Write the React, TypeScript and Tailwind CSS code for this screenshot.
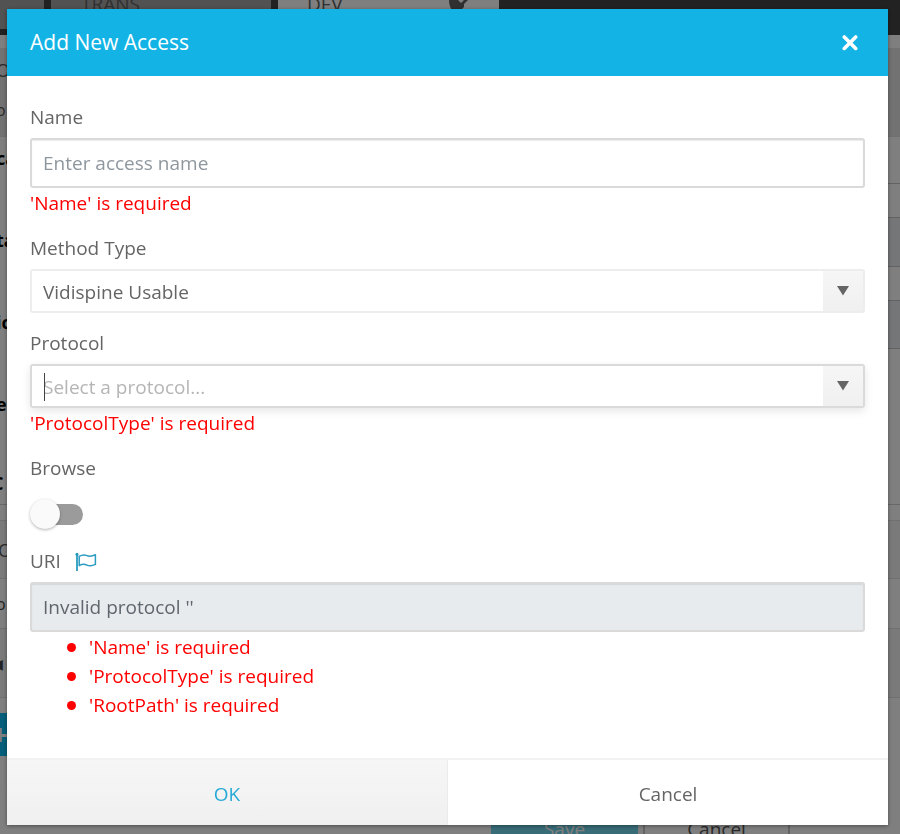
import React, { useState } from "react";

const label = "block w-fit text-[19px] leading-[29px] text-[#656565]";
const error = "mt-px text-[19px] leading-[29px] text-[#ff0000]";
const pageRow = "border-b border-[#e0e0e0]";

const uriErrors = ["'Name' is required", "'ProtocolType' is required", "'RootPath' is required"];

function CloseIcon() {
  return (
    <svg width="16" height="16" viewBox="0 0 16 16" fill="none" stroke="currentColor" strokeWidth="3.6" strokeLinecap="round">
      <path d="M2.3 2L13.7 13.4M13.7 2L2.3 13.4" />
    </svg>
  );
}

function FlagIcon() {
  return (
    <svg width="22" height="20" viewBox="0 0 22 20" fill="none" stroke="#2b9cc0" strokeWidth="1.5">
      <circle cx="2" cy="2.4" r="1.6" fill="#2b9cc0" stroke="none" />
      <path d="M2 2.4V19" strokeWidth="1.8" />
      <path d="M4.2 4.4C6.6 2.9 9 2.5 11.3 3.4C14 4.7 17 4.4 20.4 2.8V12.4C17 14.2 14 14.2 11.3 12.8C9 11.8 6.6 12.2 4.2 13.6Z" strokeLinejoin="round" />
    </svg>
  );
}

type DropDownProps = {
  id: string;
  options: string[];
  placeholder?: string;
  active?: boolean;
};

function DropDown({ id, options, placeholder, active }: DropDownProps) {
  return (
    <div
      className={
        active
          ? "relative flex h-11 rounded-[3px] border-2 border-[#dadada] shadow-[0_3px_8px_rgba(0,0,0,0.1)]"
          : "relative flex h-11 rounded-[3px] border-2 border-[#ededed]"
      }
    >
      <select
        id={id}
        defaultValue={placeholder ? "" : options[0]}
        className={
          placeholder
            ? "w-full appearance-none bg-white pt-0.5 pr-12 pl-[11px] text-[19px] text-[#b5b5b5] outline-none"
            : "w-full appearance-none bg-white pt-0.5 pr-12 pl-[11px] text-[19px] text-[#656565] outline-none"
        }
      >
        {placeholder && <option value="">{placeholder}</option>}
        {options.map((o) => (
          <option key={o}>{o}</option>
        ))}
      </select>
      {active && <span className="absolute top-[7px] left-3 h-7 w-px bg-[#444]" />}
      <span className="pointer-events-none absolute inset-y-0 right-0 flex w-10 items-center justify-center bg-linear-to-b from-[#f6f6f6] to-[#f0f0f0]">
        <svg width="12" height="10" viewBox="0 0 12 10">
          <path d="M0 0H12L6 9.5Z" fill="#656565" />
        </svg>
      </span>
    </div>
  );
}

/* Page under the dialog, only its edges stay visible */
function AccessPage() {
  return (
    <div aria-hidden="true" className="text-[18px]">
      <div className="flex h-[35px] items-start gap-[7px] bg-[#444]">
        <div className="h-[29px] w-11 bg-[#a4a4a4]" />
        <div className="h-[29px] w-[220px] bg-[#a4a4a4] pl-[30px] text-[19px] leading-[8px] text-[#606060]">TRANS</div>
        <div className="flex h-[29px] w-[221px] bg-white pl-[29px] text-[19px] leading-[8px] text-[#606060]">
          <span className="w-[142px]">DEV</span>
          <svg width="20" height="10" viewBox="0 0 20 10">
            <path d="M0 0H9L12 3L15 0H19L15 4V7L12 10H3Q0 6 0 0Z" fill="#606060" />
          </svg>
        </div>
      </div>
      <div className="h-[13px] bg-white" />
      <div className={"h-[89px] bg-[#e4e4e4] text-[#555] " + pageRow}>
        <p className="-ml-1 pt-2 leading-7">O</p>
        <p className="-ml-1 pt-4 text-[16px] leading-5">o</p>
      </div>
      <div className="flex h-[368px] justify-between border-b border-[#d0d0d0] font-bold text-black">
        <div className="flex flex-col pt-1 leading-[34px]">
          <span className="-ml-1 mb-12">ca</span>
          <span className="-ml-1 mb-12">ta</span>
          <span className="-ml-1 mb-12">ic</span>
          <span className="-ml-1 mb-12">e</span>
          <span className="-ml-2 leading-7">C</span>
        </div>
        <div className="w-1/2">
          <div className="h-[47px] border-b border-[#c4c4c4]" />
          <div className="h-[34px] border-b border-[#c4c4c4]" />
          <div className="h-[49px] border-b border-[#c4c4c4] bg-[#e9ecef]" />
          <div className="h-[34px] border-b border-[#c4c4c4]" />
          <div className="h-[48px] border-b border-[#c4c4c4] bg-[#e9ecef]" />
        </div>
      </div>
      <div className={"h-4 " + pageRow} />
      <div className={"h-[58px] bg-[#f4f4f4] text-[#555] leading-[58px] " + pageRow}>
        <p className="-ml-0.5">O</p>
      </div>
      <div className={"h-[50px] text-[16px] text-[#444] leading-[50px] " + pageRow}>
        <p className="-ml-1">o</p>
      </div>
      <div className={"h-[69px] bg-[#f4f4f4] leading-[69px] " + pageRow}>
        <p className="-ml-2 text-[14px] text-[#444]">◀</p>
      </div>
      <div className="mt-[15px] h-[43px] w-11 bg-[#0abef4]">
        <p className="-ml-2 text-[28px] leading-[43px] font-bold text-white">+</p>
      </div>
      <div className="mt-12 flex justify-end gap-[5px] pr-[110px]">
        <div className="h-[50px] w-[147px] bg-[#70d8ee] text-center text-[19px] leading-[50px] text-white">Save</div>
        <div className="h-[50px] w-[147px] border-2 border-[#c8c8c8] text-center text-[19px] leading-[46px] text-[#555]">Cancel</div>
      </div>
    </div>
  );
}

export default function App() {
  const [name, setName] = useState("");
  const [browse, setBrowse] = useState(false);

  return (
    <div className="relative h-screen overflow-hidden bg-white font-['Open_Sans','Noto_Sans',sans-serif]">
      <AccessPage />

      <div className="fixed inset-0 overflow-y-auto bg-black/50 pt-[9px] pr-3 pb-2 pl-[7px]">
        <div role="dialog" aria-labelledby="dialog-title" className="flex flex-col bg-white shadow-[0_1px_4px_rgba(0,0,0,0.4)]">
          <header className="flex h-[67px] items-center justify-between bg-[#13b4e5] pr-[30px] pl-[23px] text-white">
            <h1 id="dialog-title" className="text-[21px]">Add New Access</h1>
            <button type="button" aria-label="Close">
              <CloseIcon />
            </button>
          </header>

          <form className="flex flex-col gap-4 px-[23px] pt-[27px] pb-[38px]">
            <div>
              <label htmlFor="name" className={label}>Name</label>
              <input
                id="name"
                value={name}
                onChange={(e) => setName(e.target.value)}
                placeholder="Enter access name"
                className="mt-1.5 block h-[50px] w-full rounded-[3px] border-2 border-[#dadada] px-[11px] text-[19px] text-[#495057] shadow-[inset_0_1px_1px_rgba(0,0,0,0.08)] outline-none placeholder:text-[#8f979e]"
              />
              <p className={error}>'Name' is required</p>
            </div>

            <div>
              <label htmlFor="method" className={label + " mb-1.5"}>Method Type</label>
              <DropDown id="method" options={["Vidispine Usable"]} />
            </div>

            <div>
              <label htmlFor="protocol" className={label + " mb-1.5"}>Protocol</label>
              <DropDown id="protocol" options={[]} placeholder="Select a protocol..." active />
              <p className={error}>'ProtocolType' is required</p>
            </div>

            <div>
              <label htmlFor="browse" className={label}>Browse</label>
              <label className="relative mt-4 mb-0.5 flex h-[30px] w-[54px] items-center">
                <input
                  id="browse"
                  type="checkbox"
                  role="switch"
                  checked={browse}
                  onChange={(e) => setBrowse(e.target.checked)}
                  className="peer sr-only"
                />
                <span className="ml-2 h-[21px] w-[45px] rounded-full bg-[#9b9b9b] peer-checked:bg-[#13b4e5]" />
                <span className="absolute top-0 left-0 size-[30px] rounded-full bg-[#fafafa] shadow-[0_1px_3px_rgba(0,0,0,0.3)] peer-checked:left-6" />
              </label>
            </div>

            <div>
              <div className="flex items-center gap-3.5">
                <label htmlFor="uri" className={label}>URI</label>
                <FlagIcon />
              </div>
              <input
                id="uri"
                readOnly
                value="Invalid protocol ''"
                className="mt-1.5 block h-[50px] w-full rounded-[3px] border-2 border-[#dadada] bg-[#e7ebee] px-[11px] text-[19px] text-[#5f666d] shadow-[inset_0_1px_1px_rgba(0,0,0,0.08)] outline-none"
              />
              <ul className={error + " pl-[37px]"}>
                {uriErrors.map((message) => (
                  <li key={message} className="flex items-center gap-[13px]">
                    <span className="size-[9px] rounded-full bg-[#ff0000]" />
                    {message}
                  </li>
                ))}
              </ul>
            </div>
          </form>

          <footer className="flex h-[67px] border-t-2 border-[#f2f2f2] text-[19px]">
            <button type="button" className="flex-1 border-r border-[#ebebeb] bg-linear-to-b from-[#f6f6f6] to-[#f0f0f0] pt-1 text-[#27aad6]">OK</button>
            <button type="button" className="flex-1 pt-1 text-[#656565]">Cancel</button>
          </footer>
        </div>
      </div>
    </div>
  );
}
